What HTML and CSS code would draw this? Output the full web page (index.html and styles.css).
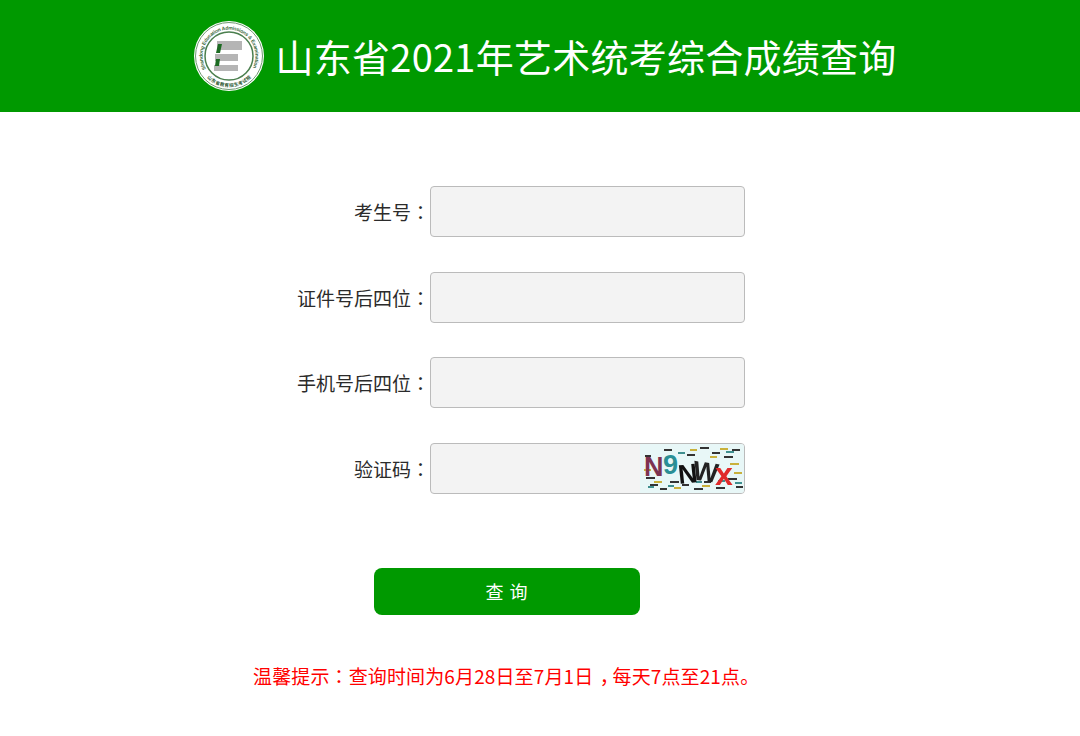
FILE: index.html
```html
<!DOCTYPE html>
<html lang="zh-CN">
<head>
    <meta charset="UTF-8">
    <title>山东省2021年艺术统考综合成绩查询</title>
    <link rel="stylesheet" href="styles.css">
</head>
<body>
    <div class="header">
        <svg class="logo" width="70" height="70" viewBox="0 0 70 70">
            <circle cx="35" cy="35" r="35" fill="#fff"/>
            <circle cx="35" cy="35" r="33.5" fill="none" stroke="#6f9a72" stroke-width="1"/>
            <circle cx="35" cy="35" r="24" fill="#fff" stroke="#4a7f4e" stroke-width="1.5"/>
            <defs>
                <path id="ring-top" d="M 12 48 A 26.4 26.4 0 1 1 58 48"/>
                <path id="ring-bottom" d="M 11 54.6 A 31 31 0 0 0 59 54.6"/>
            </defs>
            <text class="ring-text"><textPath href="#ring-top" textLength="108">Shandong Education Admissions &amp; Examination</textPath></text>
            <text class="ring-cn"><textPath href="#ring-bottom" startOffset="3" textLength="49">山东省教育招生考试院</textPath></text>
            <rect x="23" y="20" width="25" height="9" fill="#b5b5b5"/>
            <rect x="21" y="33" width="23" height="7" fill="#b5b5b5"/>
            <rect x="20" y="44" width="24" height="6" fill="#b5b5b5"/>
            <polygon points="24,23 28,23 26,32 22,32" fill="#1c6b22"/>
            <polygon points="22,38 26,38 25,45 21,45" fill="#1c6b22"/>
        </svg>
        <h1>山东省2021年艺术统考综合成绩查询</h1>
    </div>
    <div class="form">
        <div class="form-group">
            <label for="ksh">考生号<span class="punct" lang="zh-TW">：</span></label>
            <input type="text" id="ksh">
        </div>
        <div class="form-group">
            <label for="zjh">证件号后四位<span class="punct" lang="zh-TW">：</span></label>
            <input type="text" id="zjh">
        </div>
        <div class="form-group">
            <label for="sjh">手机号后四位<span class="punct" lang="zh-TW">：</span></label>
            <input type="text" id="sjh">
        </div>
        <div class="form-group">
            <label for="yzm">验证码<span class="punct" lang="zh-TW">：</span></label>
            <div class="captcha-box">
                <input type="text" id="yzm">
                <svg class="captcha" width="104" height="49" viewBox="0 0 104 49">
                    <rect width="104" height="49" fill="#e8f7f7"/>
                    <g stroke-width="2">
                        <path d="M6 34h9M10 41h8M20 45h7M24 6h8M30 38h9M42 41h7M47 11h8M54 45h9M60 4h9M64 38h7M72 9h8M76 44h9M84 13h9M88 35h9M92 6h8M96 43h7M5 12h6" stroke="#333"/>
                        <path d="M4 26h7M14 38h8M34 44h7M50 6h7M62 42h8M80 5h8M90 20h9M94 29h8M70 13h7" stroke="#c9b13c"/>
                        <path d="M8 43h6M28 42h6M38 9h7M56 38h6M78 37h7M86 8h8M95 39h7" stroke="#3f8f8f"/>
                    </g>
                    <text class="cap-char" x="4" y="32" fill="#7c3350">N</text>
                    <text class="cap-char" x="23" y="30" fill="#2a8f95">9</text>
                    <text class="cap-char" x="38" y="39" fill="#111" transform="rotate(-6 48 30)">N</text>
                    <text class="cap-char" x="53" y="37" fill="#222" transform="rotate(8 65 28)">W</text>
                    <text class="cap-x" x="75" y="41" fill="#e02a2a">x</text>
                </svg>
            </div>
        </div>
        <button class="submit" type="button">查 询</button>
    </div>
    <p class="tip">温馨提示<span class="punct" lang="zh-TW">：</span>查询时间为6月28日至7月1日<span class="comma">，</span>每天7点至21点。</p>
</body>
</html>
```

FILE: styles.css
```css
body {
    margin: 0;
    font-family: "Noto Sans CJK SC", "Noto Sans", sans-serif;
    color: #2b2b2b;
    background-color: #fff;
}
.punct {
    font-family: "Noto Sans CJK TC", sans-serif;
}
.comma {
    margin-left: 0.33em;
    margin-right: -0.33em;
}
.header {
    height: 112px;
    padding-left: 10px;
    background-color: #009900;
    display: flex;
    align-items: center;
    justify-content: center;
    gap: 12px;
}
.logo {
    flex: none;
}
.ring-text {
    font-family: "Liberation Sans", sans-serif;
    font-size: 5px;
    font-weight: bold;
    fill: #3c6b40;
}
.ring-cn {
    font-size: 4.6px;
    font-weight: bold;
    fill: #2e5a32;
}
.header h1 {
    margin: 0;
    font-size: 38px;
    font-weight: 400;
    line-height: 1;
    letter-spacing: 0.25px;
    color: #fff;
}
.form {
    padding: 74px 0 0 230px;
}
.form-group {
    display: flex;
    align-items: center;
    height: 51px;
    margin-bottom: 34.5px;
}
.form-group label {
    width: 200px;
    text-align: right;
    font-size: 19px;
}
.form-group input {
    box-sizing: border-box;
    width: 315px;
    height: 51px;
    padding: 0 10px;
    background-color: #f3f3f3;
    border: 1px solid #bbb;
    border-radius: 4px;
}
.captcha-box {
    position: relative;
    width: 315px;
    height: 51px;
}
.captcha {
    position: absolute;
    top: 1px;
    right: 1px;
    border-radius: 0 3px 3px 0;
    filter: blur(0.4px);
}
.cap-char {
    font-family: "Liberation Sans", sans-serif;
    font-size: 27px;
    font-weight: bold;
}
.cap-x {
    font-family: "Liberation Sans", sans-serif;
    font-size: 32px;
    font-weight: bold;
}
.submit {
    display: block;
    width: 266px;
    height: 47px;
    margin: 74px 0 0 144px;
    background-color: #009900;
    color: #fff;
    border: none;
    border-radius: 8px;
    font-family: inherit;
    font-size: 18px;
    letter-spacing: 1px;
}
.tip {
    margin: 0;
    padding: 47px 0 0 253px;
    font-size: 19px;
    line-height: 27px;
    letter-spacing: 0.13px;
    color: #f00;
}
```
